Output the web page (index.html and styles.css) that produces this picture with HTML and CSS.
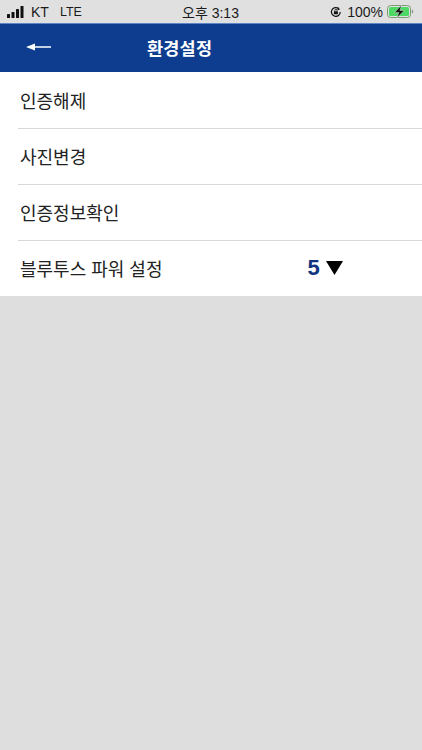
FILE: index.html
```html
<!DOCTYPE html>
<html lang="ko">
<head>
<meta charset="utf-8">
<title>환경설정</title>
<link rel="stylesheet" href="styles.css">
</head>
<body>
<div class="status">
  <div class="status-left">
    <svg class="signal" width="19" height="12" viewBox="0 0 19 12"><rect x="0" y="8" width="3" height="4" rx="0.6"/><rect x="4.5" y="6" width="3" height="6" rx="0.6"/><rect x="9" y="3" width="3" height="9" rx="0.6"/><rect x="13.5" y="0" width="3" height="12" rx="0.6"/></svg>
    <span class="carrier">KT</span>
    <span class="net">LTE</span>
  </div>
  <div class="clock">오후 3:13</div>
  <div class="status-right">
    <svg class="lock" width="12" height="12" viewBox="0 0 12 12"><path d="M10.2 6A4.4 4.4 0 1 1 8.6 2.6" fill="none" stroke="#111" stroke-width="1.2"/><path d="M8 1l2 2.4-2.6.8z" fill="#111"/><rect x="3.9" y="5.2" width="4" height="3" rx=".5" fill="#111"/><path d="M4.8 5.2V4.4a1.1 1.1 0 0 1 2.2 0v.8" fill="none" stroke="#111" stroke-width=".8"/></svg>
    <span class="pct">100%</span>
    <svg class="battery" width="27" height="13" viewBox="0 0 27 13"><rect x=".5" y=".5" width="23" height="12" rx="3" fill="none" stroke="#7a9a72"/><rect x="2" y="2" width="20" height="9" rx="1.6" fill="#4cd964"/><path d="M24.8 4.4c1 .2 1.6 1 1.6 2.1s-.6 1.9-1.6 2.1z" fill="#999"/><path d="M14.6 0 7.6 7.4h4.2L10 13l7.2-7.6h-4.3z" fill="#111" stroke="#e0e0e0" stroke-width=".5"/></svg>
  </div>
</div>
<header class="appbar">
  <svg class="back" width="26" height="10" viewBox="0 0 26 10"><path d="M0 5 9 1.6V4.2H25V5.8H9V8.4z" fill="#fff"/></svg>
  <h1 class="title">환경설정</h1>
</header>
<main class="menu">
  <div class="row"><span>인증해제</span></div>
  <div class="row"><span>사진변경</span></div>
  <div class="row"><span>인증정보확인</span></div>
  <div class="row last">
    <span>블루투스 파워 설정</span>
    <div class="select"><span class="value">5</span><svg class="caret" width="17" height="14" viewBox="0 0 17 14"><path d="M0 0H17L8.5 14z"/></svg></div>
  </div>
</main>
</body>
</html>
```
FILE: styles.css
```css
* { box-sizing: border-box; }
html, body { margin: 0; padding: 0; }
body {
  width: 422px;
  height: 750px;
  overflow: hidden;
  background: #dedede;
  color: #222;
  font-family: "Liberation Sans", "Noto Sans CJK KR", sans-serif;
}
.status {
  height: 23px;
  background: #e0e0e0;
  display: grid;
  grid-template-columns: 1fr auto 1fr;
  align-items: center;
  padding: 0 8px 0 7px;
  font-size: 14px;
  color: #1a1a1a;
}
.status-left { display: flex; align-items: center; }
.signal { fill: #111; margin-right: 5px; }
.net { margin-left: 11px; font-size: 12.5px; }
.clock { font-size: 14px; }
.status-right { display: flex; align-items: center; justify-content: flex-end; gap: 5px; }
.pct { margin-right: -1px; }
.appbar {
  height: 49px;
  background: #0e3d8f;
  border-top: 1px solid #5d86c6;
  display: flex;
  align-items: center;
  padding-left: 26px;
  padding-bottom: 2px;
  color: #fff;
}
.back { flex: none; }
.title {
  margin: 0 0 0 95px;
  font-size: 17.5px;
  font-weight: 700;
  letter-spacing: 0.2px;
}
.menu { background: #fff; padding-left: 18px; padding-top: 1px; }
.row {
  height: 56px;
  display: flex;
  align-items: center;
  padding-left: 2px;
  padding-bottom: 1px;
  border-bottom: 1px solid #d9d9d9;
  font-size: 18px;
  color: #222;
}
.row.last { border-bottom: 0; height: 55px; }
.select { display: flex; align-items: center; margin-left: 145px; gap: 6px; }
.value { font-size: 22px; font-weight: 700; color: #12357f; }
.caret { fill: #000; }
```
